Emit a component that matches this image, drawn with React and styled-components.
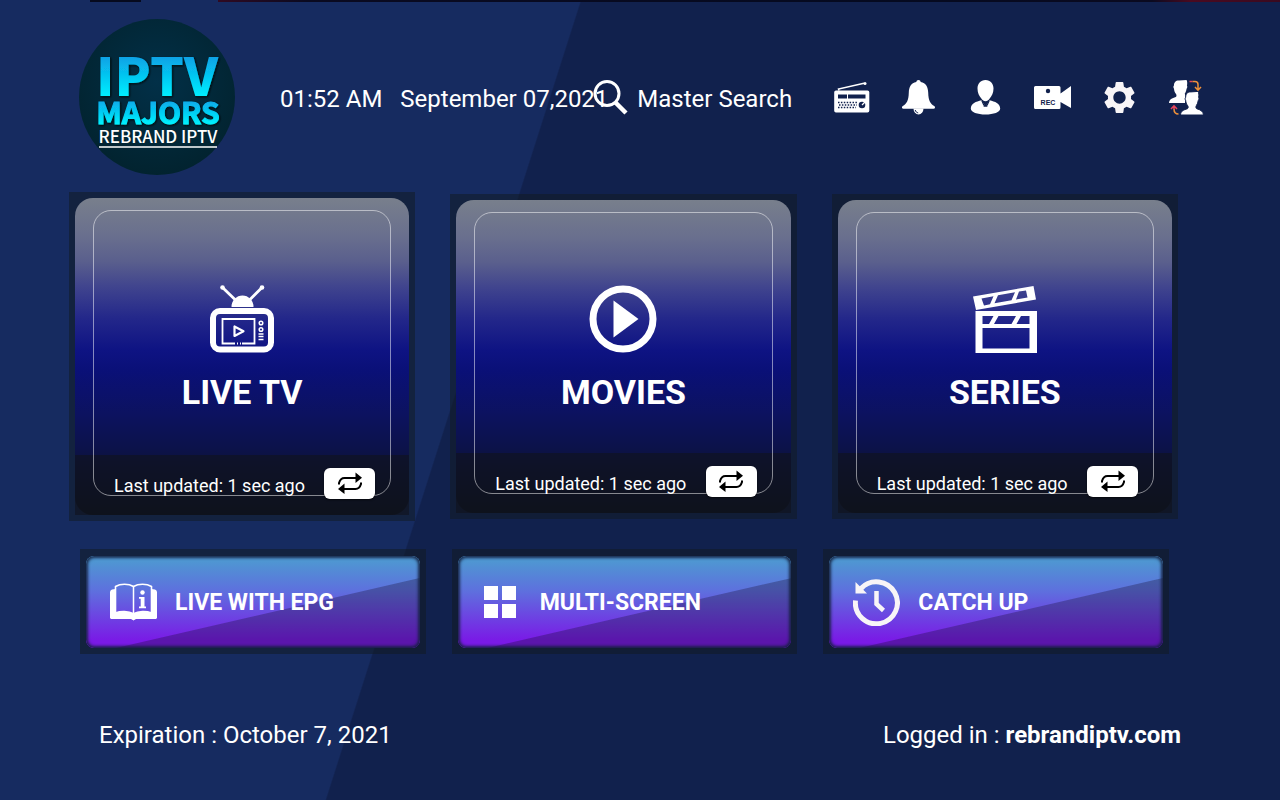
import styled, { createGlobalStyle } from "styled-components";

const GlobalStyle = createGlobalStyle`
  * {
    box-sizing: border-box;
  }
  body {
    margin: 0;
    background-color: #11214d;
    color: white;
    font-family: Roboto, "Liberation Sans", sans-serif;
  }
  button {
    border: none;
    padding: 0;
    background: none;
    color: inherit;
    font: inherit;
    cursor: pointer;
  }
`;

const Container = styled.div`
  min-height: 100vh;
  background: linear-gradient(
        90deg,
        transparent 7%,
        #060a1e 7%,
        #060a1e 11%,
        transparent 11%,
        transparent 17%,
        #300a22 17%,
        #0a0a20 24%,
        #050a20 70%,
        #0a0a20 90%,
        #4a0a20 93%,
        #3a0a20 100%
      )
      top / 100% 2px no-repeat,
    linear-gradient(107.7deg, #162b60 37.8%, #11214d 37.9%);
`;

const Header = styled.header`
  display: flex;
  align-items: center;
  padding: 19px 75px 0 79px;
`;

const Logo = styled.svg`
  flex: none;
  width: 156px;
  height: 156px;
`;

const Clock = styled.div`
  display: flex;
  gap: 18px;
  margin-left: 45px;
  padding-top: 4px;
  font-size: 24px;
  line-height: 28px;
  white-space: nowrap;
`;

const Time = styled.span``;

const DateText = styled.span`
  width: 193px;
`;

const Search = styled.button`
  display: flex;
  align-items: center;
  gap: 9px;
  font-size: 24px;
  line-height: 28px;
  white-space: nowrap;
`;

const SearchLabel = styled.span`
  padding-top: 4px;
`;

const Menu = styled.nav`
  display: flex;
  gap: 30px;
  margin-left: auto;
`;

const MenuButton = styled.button`
  display: flex;
  align-items: center;
  justify-content: center;
  width: 37px;
  height: 37px;
`;

const Tiles = styled.main`
  display: grid;
  grid-template-columns: repeat(3, 1fr);
  align-items: center;
  gap: 35px;
  padding: 17px 102px 0 69px;
`;

const Tile = styled.section`
  padding: 6px;
  background-color: rgba(18, 28, 36, 0.55);
`;

const TileBody = styled.div`
  position: relative;
  display: flex;
  flex-direction: column;
  height: ${(props) => (props.$focused ? "317px" : "313px")};

  &::before {
    content: "";
    position: absolute;
    inset: 0;
    border-radius: 18px;
    background: linear-gradient(
      #787f8c 0%,
      #696f8e 12%,
      #5a5f8d 20%,
      #40448e 28%,
      #23278a 38%,
      #0e1383 48%,
      #0a1078 54%,
      #0c1260 68%,
      #0c124a 79%,
      #0c1236 86%,
      #0c121c 100%
    );
  }

  &::after {
    content: "";
    position: absolute;
    inset: 12px 18px 19px;
    border: 1px solid rgba(255, 255, 255, 0.5);
    border-radius: 18px;
    pointer-events: none;
  }
`;

const TileButton = styled.button`
  position: relative;
  flex: 1;
  display: flex;
  flex-direction: column;
  align-items: center;
  justify-content: flex-end;
  gap: 19px;
  padding-bottom: ${(props) => (props.$focused ? "43px" : "41px")};
`;

const TileTitle = styled.span`
  font-size: 34px;
  line-height: 40px;
  font-weight: 700;
`;

const TileFooter = styled.div`
  position: relative;
  display: flex;
  align-items: center;
  justify-content: space-between;
  height: 60px;
  padding: 0 34px 4px 39px;
  background-color: rgba(17, 19, 28, 0.6);
`;

const Updated = styled.span`
  padding-top: 6px;
  font-size: 18px;
  line-height: 22px;
  white-space: nowrap;
`;

const Refresh = styled.button`
  display: flex;
  align-items: center;
  justify-content: center;
  width: 51px;
  height: 31px;
  border-radius: 6px;
  background-color: white;
  color: black;
  box-shadow: 0 1px 2px rgba(0, 0, 0, 0.6);
  z-index: 1;
`;

const Shortcuts = styled.nav`
  display: grid;
  grid-template-columns: repeat(3, 1fr);
  gap: 26px;
  padding: 28px 111px 0 80px;
`;

const ShortcutFrame = styled.div`
  padding: 7px 6px 6px;
  background-color: rgba(18, 28, 36, 0.55);
`;

const Shortcut = styled.button`
  position: relative;
  display: flex;
  align-items: center;
  gap: 18px;
  width: 100%;
  height: 92px;
  padding-left: 24px;
  border-radius: 8px;
  overflow: hidden;
  background: linear-gradient(#4f96d2 6%, #5e70de 38%, #7a1ae6 92%);
  font-size: 23px;
  font-weight: 700;
  white-space: nowrap;

  &::before {
    content: "";
    position: absolute;
    inset: 0;
    background-color: rgba(20, 10, 40, 0.3);
    clip-path: polygon(9% 100%, 100% 24%, 100% 100%);
  }

  &::after {
    content: "";
    position: absolute;
    inset: 0;
    border-radius: 8px;
    box-shadow: inset 0 0 3px 2px rgba(20, 32, 63, 0.9);
  }
`;

const ShortcutLabel = styled.span`
  position: relative;
`;

const Footer = styled.footer`
  display: flex;
  justify-content: space-between;
  padding: 66px 99px 0;
  font-size: 24px;
  line-height: 30px;
`;

const FooterText = styled.span``;

const SearchIcon = () => (
  <svg width="35" height="36" viewBox="0 0 35 36" fill="none" stroke="white">
    <circle cx="14" cy="14.5" r="12" strokeWidth="3" />
    <path d="M22.5 23.5L33 34" strokeWidth="4.5" />
  </svg>
);

const RadioIcon = () => (
  <svg width="37" height="37" viewBox="0 0 37 37">
    <path
      fill="white"
      fillRule="evenodd"
      d="M3 11.5h31.5a1.8 1.8 0 0 1 1.800 1.800v18.500a1.800 1.800 0 0 1-1.800 1.800H3a1.800 1.800 0 0 1-1.800-1.800V13.300a1.800 1.800 0 0 1 1.800-1.800zM5 15.500v4h9v-4zM15 15.500v4h17.500v-4z"
    />
    <path d="M6 11.500l-.5-1.500L31 4.200" fill="none" stroke="white" strokeWidth="1.5" />
    <circle cx="32" cy="4.5" r="1.5" fill="white" />
    <path
      d="M5 23.500h19M6 26h18M5 28.500h18"
      stroke="#11214d"
      strokeWidth="1.4"
      strokeDasharray="1.5 1.4"
    />
    <circle cx="29" cy="26" r="3.3" fill="#11214d" />
    <path d="M29 26l3-3" stroke="white" strokeWidth="1.2" />
  </svg>
);

const BellIcon = () => (
  <svg width="37" height="37" viewBox="0 0 37 37" fill="white">
    <path d="M18.500 1c1.300 0 2 .8 2.200 2.100 5.300 1 7.300 5 7.500 10.400.2 8.500 2.500 11.500 6 13.500 1.400.9 1 2.800-.7 2.800H3.500c-1.700 0-2.100-1.900-.7-2.800 3.500-2 5.800-5 6-13.500.2-5.400 2.200-9.400 7.500-10.400C16.500 1.800 17.200 1 18.500 1z" />
    <path d="M13.500 29.500h10a5 6 0 0 1-10 0z" />
    <path d="M15.2 31c.4 1.600 1.400 2.600 3 2.900" fill="none" stroke="#11214d" />
  </svg>
);

const UserIcon = () => (
  <svg width="37" height="37" viewBox="0 0 37 37" fill="white">
    <path d="M18.500 1c5 0 8 3.600 8 8.600 0 4-1.600 7.600-4 10.200-1 1.200-2.200 2.400-4 2.400s-3-1.200-4-2.400c-2.400-2.600-4-6.200-4-10.200 0-5 3-8.600 8-8.600z" />
    <path d="M14.500 21.300l2.800 4.500-.8 2h4l-.8-2 2.800-4.500c5.600 1.400 10.500 3 10.700 8.200.1 3.800-6.700 6-14.700 6s-14.800-2.200-14.700-6c.2-5.200 5.100-6.800 10.700-8.200z" />
    <path
      d="M14.800 21.500l2.200 5M22.200 21.500l-2.200 5"
      stroke="#11214d"
      strokeWidth="1.2"
    />
  </svg>
);

const RecordIcon = () => (
  <svg width="37" height="37" viewBox="0 0 37 37" fill="white">
    <path d="M1.500 7h23.500a1.500 1.500 0 0 1 1.500 1.500v6L37 7v22l-10.500-6v5.500a1.500 1.500 0 0 1-1.500 1.500H1.500A1.500 1.500 0 0 1 0 28.500v-20A1.500 1.500 0 0 1 1.500 7z" />
    <circle cx="14" cy="12" r="2.2" fill="#11214d" />
    <text
      x="14"
      y="26"
      textAnchor="middle"
      fill="#11214d"
      fontFamily="Liberation Sans, sans-serif"
      fontSize="7"
      fontWeight="700"
    >
      REC
    </text>
  </svg>
);

const GearIcon = () => (
  <svg width="37" height="37" viewBox="0 0 24 24" fill="#f8f5f7">
    <path d="M19.430 12.980c.04-.32.07-.64.07-.98s-.03-.66-.07-.98l2.110-1.650c.19-.15.24-.42.12-.64l-2-3.460c-.12-.22-.39-.3-.61-.22l-2.490 1c-.52-.4-1.080-.73-1.690-.98l-.38-2.650C14.460 2.180 14.250 2 14 2h-4c-.25 0-.46.18-.49.42l-.38 2.650c-.61.25-1.170.59-1.690.98l-2.490-1c-.23-.09-.49 0-.61.22l-2 3.460c-.13.22-.07.49.12.64l2.110 1.650c-.04.32-.07.65-.07.98s.03.66.07.98l-2.110 1.650c-.19.15-.24.42-.12.64l2 3.460c.12.22.39.3.61.22l2.490-1c.52.4 1.080.73 1.690.98l.38 2.650c.03.24.24.42.49.42h4c.25 0 .46-.18.49-.42l.38-2.650c.61-.25 1.170-.59 1.690-.98l2.490 1c.23.09.49 0 .61-.22l2-3.460c.12-.22.07-.49-.12-.64l-2.110-1.650zM12 16c-2.210 0-4-1.790-4-4s1.790-4 4-4 4 1.790 4 4-1.790 4-4 4z" />
  </svg>
);

const SwitchIcon = () => (
  <svg width="37" height="37" viewBox="0 0 37 37">
    <path
      fill="white"
      d="M1 24c.3-3.800 3-4.600 6.800-6 .9-.5.900-2 .2-3-1.300-1.700-1.900-3.400-2-5.200-.8-1-.8-2.600 0-3.200-.2-3.200 1.800-5.300 5.200-5.100L18.500 1c.8 1 1 4 .4 5.600.7.900.4 2.500-.4 3.300-.2 1.900-.8 3.400-1.800 4.900 1 1 .5 7 .3 9.200z"
    />
    <path
      fill="white"
      stroke="#11214d"
      strokeWidth="1"
      d="M12.500 36c.2-4 3-5 6.900-6.300 1-.5 1-2 .3-3-1.300-1.700-1.900-3.400-2-5.200-.8-1-.8-2.600 0-3.200-.2-3.500 1.800-5.600 5.200-5.400l7.100-.5c.8 1 1.200 4.300.6 5.900.7.900.4 2.500-.4 3.300-.2 1.900-.8 3.400-1.800 4.900-.7 1-.7 2.700.3 3.200 3.900 1.300 6.500 2.300 6.800 6.300z"
    />
    <path d="M21.500 2.500h3" fill="none" stroke="#e8475c" strokeWidth="1.5" />
    <path
      d="M24.500 2.500h2.500c2 0 3 1.200 3 3v5.500M27 8l3 3.200L33 8"
      fill="none"
      stroke="#f0913a"
      strokeWidth="1.5"
    />
    <path d="M6 30v-3M3 30l3-3.200L9 30" fill="none" stroke="#e8475c" strokeWidth="1.5" />
    <path d="M6 30c0 3.500 1.500 5 4.500 5" fill="none" stroke="#f0913a" strokeWidth="1.5" />
  </svg>
);

const TvIcon = () => (
  <svg width="68" height="68" viewBox="0 0 68 68" fill="none" stroke="white">
    <rect x="5" y="26" width="58" height="38.500" rx="7" strokeWidth="6" />
    <path d="M14.500 2.500L28 15.500M54 2.500L41 15.500" strokeWidth="2.800" />
    <circle cx="14.5" cy="2.5" r="2.3" fill="white" stroke="none" />
    <circle cx="54" cy="2.5" r="2.3" fill="white" stroke="none" />
    <path d="M23.500 22a11 11.500 0 0 1 22 0z" fill="white" stroke="none" />
    <path d="M27 58.500H14.500V34h32v24.500H34M29 58.500h1M32 58.500h1" strokeWidth="1.8" />
    <path d="M26.500 41.500v9.500l9-4.700z" strokeWidth="2.2" strokeLinejoin="round" />
    <circle cx="53" cy="38" r="1.800" strokeWidth="1.5" />
    <circle cx="53" cy="44.500" r="1.800" strokeWidth="1.5" />
    <path d="M50.500 49h5M50.500 51.500h5M50.500 54.500h5" strokeWidth="1.4" />
  </svg>
);

const PlayIcon = () => (
  <svg width="68" height="68" viewBox="0 0 68 68">
    <circle cx="34" cy="34" r="30" fill="none" stroke="white" strokeWidth="7" />
    <path d="M24.500 15.500v37L49.500 34z" fill="white" />
  </svg>
);

const ClapperIcon = () => (
  <svg width="68" height="68" viewBox="0 0 68 68" fill="white" fillRule="evenodd">
    <path d="M4.500 26H66v42H4.500zM11.500 43v20.500h47V43zM11.500 31v8H18l4.500-8zM27.500 31L23 39h17.500l4.500-8zM50 31l-4.500 8h13v-8z" />
    <path d="M2 11.500L62.500 1l2.500 13.500L5 25zM10.500 13.500l2.500 7 6-1.200 3.500-8zM27 10.300l-3.500 8 17-3 3.500-8zM48 6.600l-3 8 11.500-2-1.500-7.200z" />
  </svg>
);

const RepeatIcon = () => (
  <svg width="26" height="24" viewBox="0 0 26 24">
    <path
      d="M2 13.500V12c1-3.500 2.500-5 5.500-5H19M24 11.500V13c-1 3.500-2.500 5-5.500 5H7"
      fill="none"
      stroke="currentColor"
      strokeWidth="2"
    />
    <path d="M18.500 1.500v10.500l6.500-5.200zM7.500 12.500v10.500L1 18z" fill="currentColor" />
  </svg>
);

const BookIcon = () => (
  <svg width="47" height="38" viewBox="0 0 47 38">
    <path
      d="M5.500 3.500c5-3 13-3 18 0 5-3 13-3 18 0V30c-5-2-13-2-18 .8-5-2.800-13-2.800-18-.8z"
      fill="none"
      stroke="white"
      strokeWidth="1.6"
    />
    <path d="M23.500 3.500V31" stroke="white" strokeWidth="1.5" />
    <path
      d="M5.500 6L2 6.500a3 3 0 0 0-2 3V35l1 1h20l2.500 1.500L26 36h20l1-1V9.500a3 3 0 0 0-2-3L41.500 6v24c-5-2-13-2-18 .8-5-2.800-13-2.800-18-.8z"
      fill="white"
    />
    <circle cx="32.5" cy="9.5" r="2.2" fill="white" />
    <path d="M29 14h5.500v9.500H36v1.800h-7v-1.800h1.700v-7.700H29z" fill="white" />
  </svg>
);

const GridIcon = () => (
  <svg width="40" height="32" viewBox="0 0 40 32" fill="white">
    <path d="M2 0h14v14H2zM20 0h14v14H20zM2 18h14v14H2zM20 18h14v14H20z" />
  </svg>
);

const HistoryIcon = () => (
  <svg width="47" height="47" viewBox="0 0 47 47" fill="none" stroke="#f8f5f7">
    <path d="M2.500 21.500A21 21 0 1 0 8 9.500" strokeWidth="5" />
    <path d="M2.500 3v11.500H14z" fill="#f8f5f7" stroke="none" />
    <path d="M23.500 12v13l7 6.500" strokeWidth="4.5" />
  </svg>
);

const BrandLogo = () => (
  <Logo viewBox="0 0 156 156" role="img" aria-label="IPTV Majors">
    <defs>
      <radialGradient id="disc" cx="50%" cy="40%" r="60%">
        <stop offset="0" stopColor="#023048" />
        <stop offset="1" stopColor="#02232f" />
      </radialGradient>
      <linearGradient id="iptv" x1="0" y1="36" x2="0" y2="78" gradientUnits="userSpaceOnUse">
        <stop offset="0" stopColor="#0a9ee4" />
        <stop offset="1" stopColor="#00f0ff" />
      </linearGradient>
      <linearGradient id="majors" x1="0" y1="80" x2="0" y2="106" gradientUnits="userSpaceOnUse">
        <stop offset="0" stopColor="#0aa4e8" />
        <stop offset="1" stopColor="#00f4ff" />
      </linearGradient>
      <filter id="shadow">
        <feDropShadow dx="1" dy="1" stdDeviation="1" floodColor="#000a10" />
      </filter>
    </defs>
    <circle cx="78" cy="78" r="78" fill="url(#disc)" />
    <g fontFamily="Noto Sans CJK SC, Open Sans, sans-serif" textAnchor="middle">
      <text
        x="78"
        y="77"
        fontSize="53"
        fontWeight="900"
        fill="url(#iptv)"
        filter="url(#shadow)"
      >
        IPTV
      </text>
      <text
        x="79"
        y="105"
        fontSize="30"
        fontWeight="700"
        fill="url(#majors)"
        stroke="url(#majors)"
        strokeWidth="1"
        filter="url(#shadow)"
      >
        MAJORS
      </text>
      <text x="79" y="124" fontSize="17" fontWeight="500" fill="white">
        REBRAND IPTV
      </text>
    </g>
    <path d="M20 128h118" stroke="white" strokeWidth="1.5" />
  </Logo>
);

const menu = [
  { name: "Radio", icon: <RadioIcon /> },
  { name: "Notifications", icon: <BellIcon /> },
  { name: "Account", icon: <UserIcon /> },
  { name: "Recordings", icon: <RecordIcon /> },
  { name: "Settings", icon: <GearIcon /> },
  { name: "Switch user", icon: <SwitchIcon /> },
];

const tiles = [
  { title: "LIVE TV", icon: <TvIcon />, focused: true },
  { title: "MOVIES", icon: <PlayIcon /> },
  { title: "SERIES", icon: <ClapperIcon /> },
];

const shortcuts = [
  { title: "LIVE WITH EPG", icon: <BookIcon /> },
  { title: "MULTI-SCREEN", icon: <GridIcon /> },
  { title: "CATCH UP", icon: <HistoryIcon /> },
];

const App = () => {
  return (
    <Container>
      <GlobalStyle />
      <Header>
        <BrandLogo />
        <Clock>
          <Time>01:52 AM</Time>
          <DateText>September 07,2021</DateText>
        </Clock>
        <Search>
          <SearchIcon />
          <SearchLabel>Master Search</SearchLabel>
        </Search>
        <Menu>
          {menu.map((item) => (
            <MenuButton key={item.name} aria-label={item.name}>
              {item.icon}
            </MenuButton>
          ))}
        </Menu>
      </Header>
      <Tiles>
        {tiles.map((tile) => (
          <Tile key={tile.title}>
            <TileBody $focused={tile.focused}>
              <TileButton $focused={tile.focused}>
                {tile.icon}
                <TileTitle>{tile.title}</TileTitle>
              </TileButton>
              <TileFooter>
                <Updated>Last updated: 1 sec ago</Updated>
                <Refresh aria-label={`Refresh ${tile.title}`}>
                  <RepeatIcon />
                </Refresh>
              </TileFooter>
            </TileBody>
          </Tile>
        ))}
      </Tiles>
      <Shortcuts>
        {shortcuts.map((item) => (
          <ShortcutFrame key={item.title}>
            <Shortcut>
              {item.icon}
              <ShortcutLabel>{item.title}</ShortcutLabel>
            </Shortcut>
          </ShortcutFrame>
        ))}
      </Shortcuts>
      <Footer>
        <FooterText>Expiration : October 7, 2021</FooterText>
        <FooterText>
          Logged in : <b>rebrandiptv.com</b>
        </FooterText>
      </Footer>
    </Container>
  );
};

export default App;
